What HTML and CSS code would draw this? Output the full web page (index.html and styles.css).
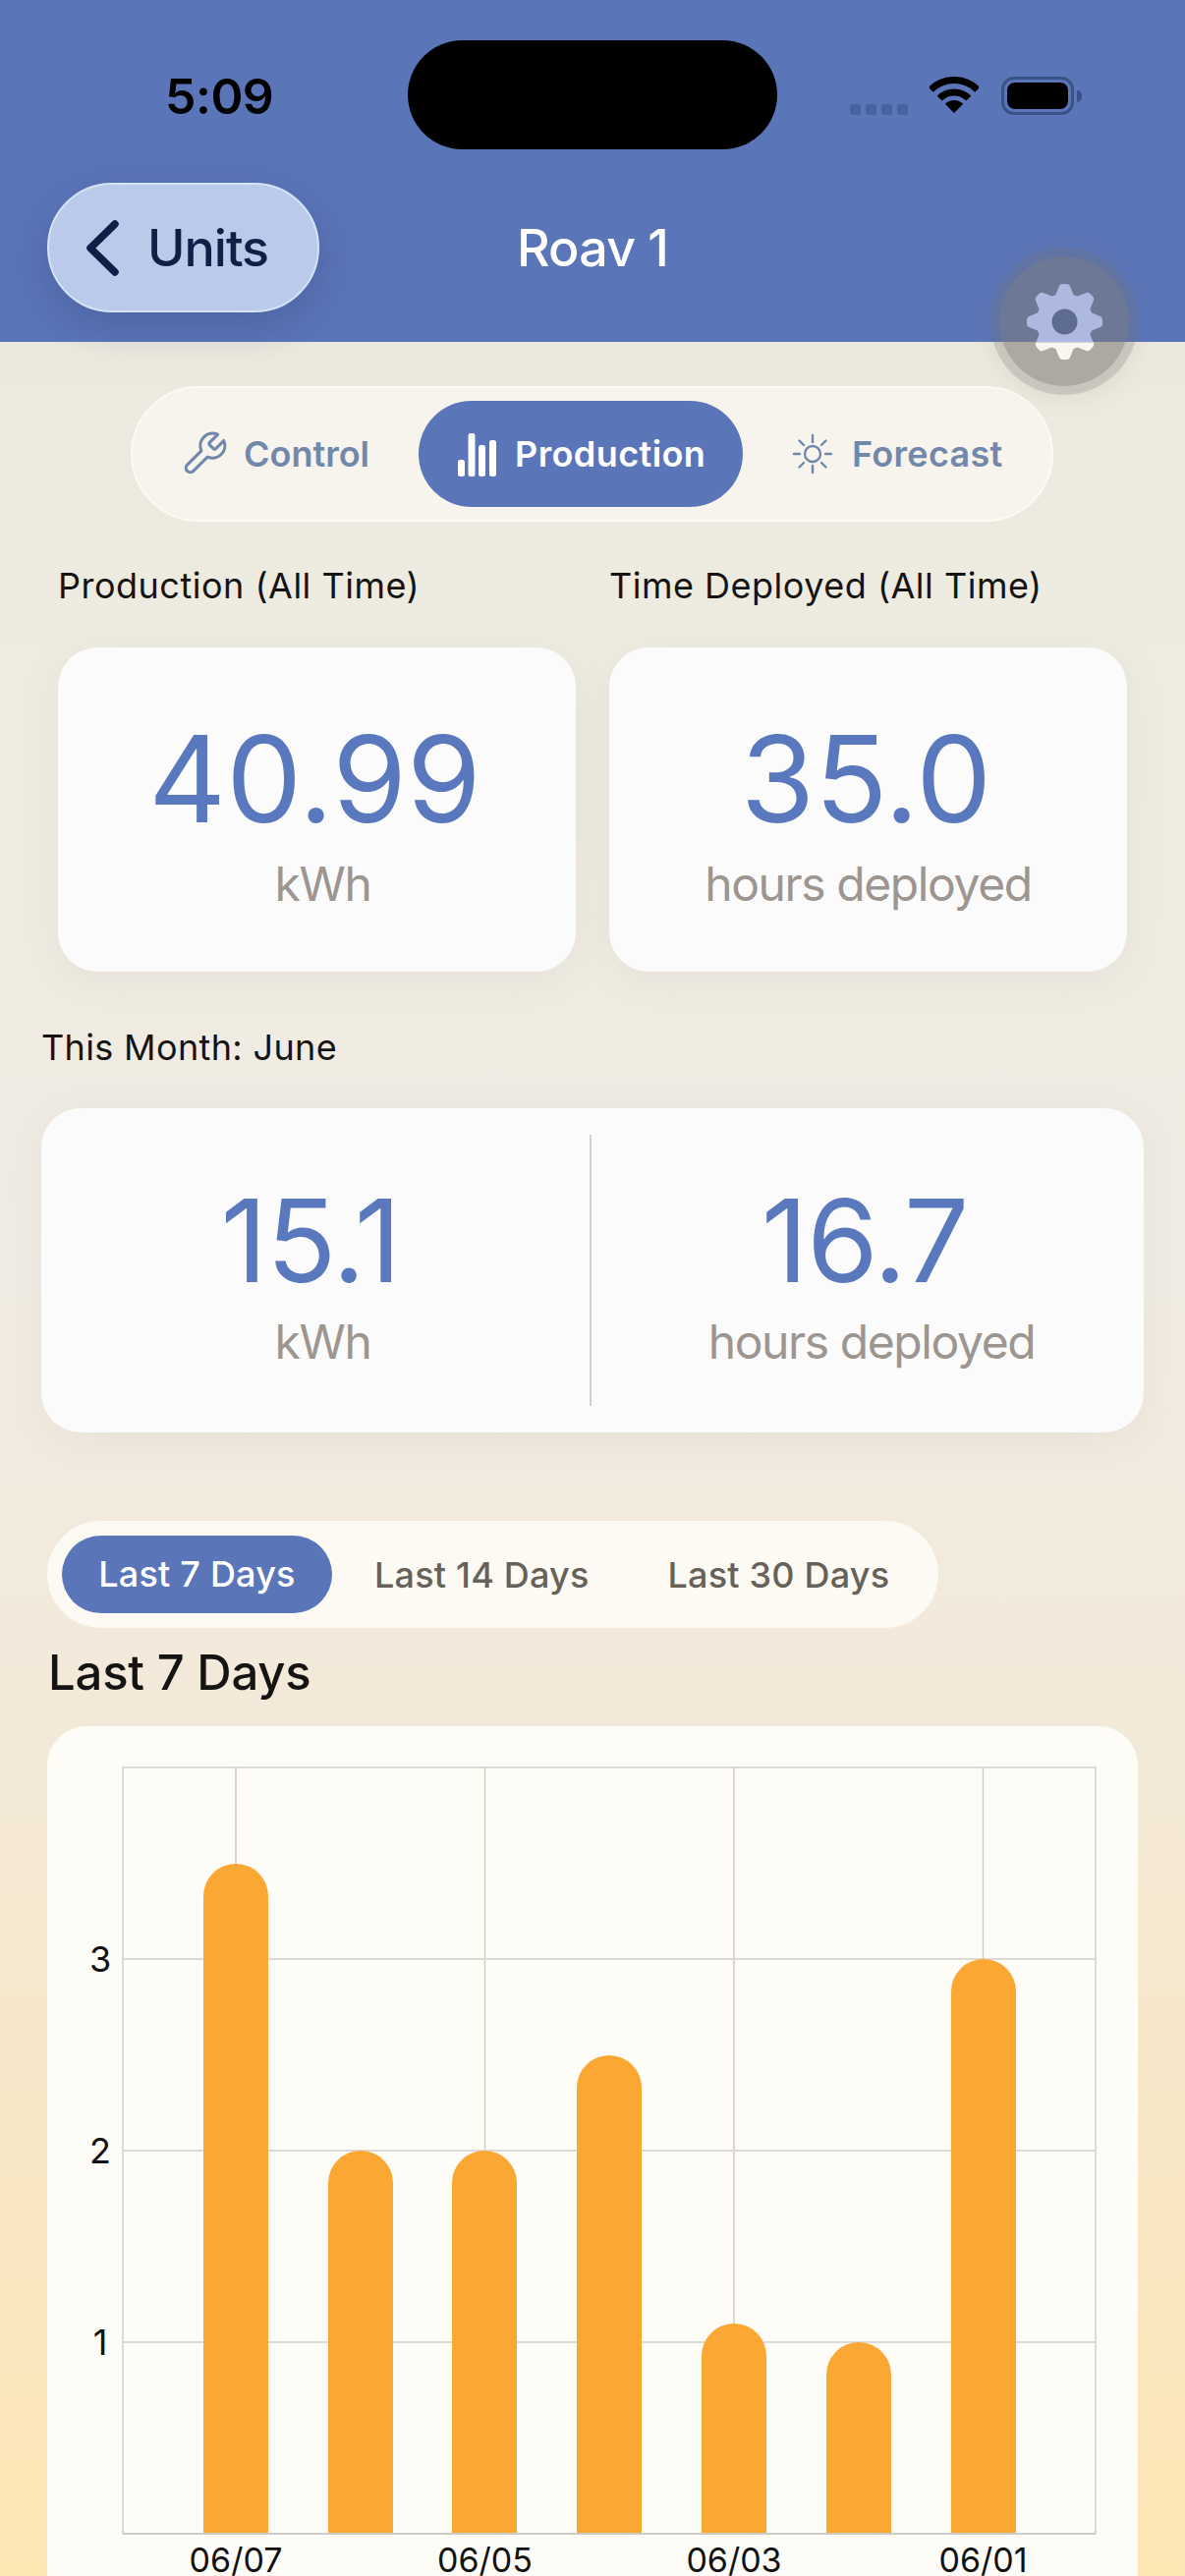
FILE: index.html
```html
<!DOCTYPE html>
<html lang="en">
<head>
<meta charset="utf-8">
<title>Roav 1</title>
<link rel="stylesheet" href="styles.css">
</head>
<body>
<div class="screen">
  <header class="header">
    <div class="status-bar">
      <div class="time">5:09</div>
      <div class="island"></div>
      <div class="status-icons">
        <div class="signal"><i></i><i></i><i></i><i></i></div>
        <svg class="wifi" viewBox="0 0 50 37" width="50" height="37">
          <path d="M1.3 13.3A33.5 33.5 0 0 1 48.7 13.3" fill="none" stroke="#000" stroke-width="7"/>
          <path d="M10.15 22.15A21 21 0 0 1 39.85 22.15" fill="none" stroke="#000" stroke-width="7"/>
          <path d="M25 37L15.8 27.8A13 13 0 0 1 34.2 27.8Z" fill="#000"/>
        </svg>
        <div class="battery"><div class="battery-fill"></div></div>
        <div class="battery-nub"></div>
      </div>
    </div>
    <div class="nav">
      <div class="nav-left">
        <button class="back">
          <svg viewBox="0 0 33 57" width="33" height="57"><path d="M29 4L4 28.5L29 53" fill="none" stroke="#0f1f45" stroke-width="7.5" stroke-linecap="round" stroke-linejoin="round"/></svg>
          <span>Units</span>
        </button>
      </div>
      <h1 class="title">Roav 1</h1>
      <div></div>
    </div>
  </header>

  <button class="gear-btn" aria-label="Settings">
    <svg viewBox="0 0 77 77" width="77" height="77">
      <defs>
        <mask id="gearmask">
          <g fill="#fff">
            <circle cx="38.5" cy="38.5" r="29"/>
            <path d="M29 12 L33 2.2 Q34 0 36.5 0 L40.5 0 Q43 0 44 2.2 L48 12 Z"/>
            <path d="M29 12 L33 2.2 Q34 0 36.5 0 L40.5 0 Q43 0 44 2.2 L48 12 Z" transform="rotate(45 38.5 38.5)"/>
            <path d="M29 12 L33 2.2 Q34 0 36.5 0 L40.5 0 Q43 0 44 2.2 L48 12 Z" transform="rotate(90 38.5 38.5)"/>
            <path d="M29 12 L33 2.2 Q34 0 36.5 0 L40.5 0 Q43 0 44 2.2 L48 12 Z" transform="rotate(135 38.5 38.5)"/>
            <path d="M29 12 L33 2.2 Q34 0 36.5 0 L40.5 0 Q43 0 44 2.2 L48 12 Z" transform="rotate(180 38.5 38.5)"/>
            <path d="M29 12 L33 2.2 Q34 0 36.5 0 L40.5 0 Q43 0 44 2.2 L48 12 Z" transform="rotate(225 38.5 38.5)"/>
            <path d="M29 12 L33 2.2 Q34 0 36.5 0 L40.5 0 Q43 0 44 2.2 L48 12 Z" transform="rotate(270 38.5 38.5)"/>
            <path d="M29 12 L33 2.2 Q34 0 36.5 0 L40.5 0 Q43 0 44 2.2 L48 12 Z" transform="rotate(315 38.5 38.5)"/>
          </g>
        </mask>
      </defs>
      <g mask="url(#gearmask)">
        <rect x="0" y="0" width="77" height="59.5" fill="#adb9df"/>
        <rect x="0" y="59.5" width="77" height="17.5" fill="#f8f6f0"/>
      </g>
      <circle cx="38.5" cy="38.5" r="13" fill="#5e6c94"/>
    </svg>
  </button>

  <main class="content">
    <nav class="tabs">
      <div class="tab tab-control">
        <svg viewBox="0 0 24 24" width="50" height="50"><path d="M14.7 6.3a1 1 0 0 0 0 1.4l1.6 1.6a1 1 0 0 0 1.4 0l3.77-3.77a6 6 0 0 1-7.94 7.94l-6.91 6.91a2.12 2.12 0 0 1-3-3l6.91-6.91a6 6 0 0 1 7.94-7.94l-3.76 3.76z" fill="none" stroke="#7288ab" stroke-width="1.5" stroke-linejoin="round"/></svg>
        <span>Control</span>
      </div>
      <div class="tab tab-active">
        <svg viewBox="0 0 39 45" width="39" height="45" fill="#fff">
          <rect x="0" y="28" width="7" height="17" rx="2.5"/>
          <rect x="10.5" y="1" width="7" height="44" rx="2.5"/>
          <rect x="21" y="13" width="7" height="32" rx="2.5"/>
          <rect x="32" y="8" width="7" height="37" rx="2.5"/>
        </svg>
        <span>Production</span>
      </div>
      <div class="tab tab-forecast">
        <svg viewBox="0 0 42 42" width="42" height="42" fill="none" stroke="#7288ab" stroke-width="2.4" stroke-linecap="round"><circle cx="21" cy="21" r="8"/><path d="M21 2v7M21 33v7M7.5 7.5l4.5 4.5M30 30l4.5 4.5M2 21h6M34 21h6M7.5 34.500l4.500-4.500M34.500 7.500L30 12"/></svg>
        <span>Forecast</span>
      </div>
    </nav>

    <section class="all-time">
      <div class="stat-col">
        <div class="label">Production (All Time)</div>
        <div class="card stat-card">
          <div class="value value-lg">40.99</div>
          <div class="unit unit-nudge">kWh</div>
        </div>
      </div>
      <div class="stat-col">
        <div class="label">Time Deployed (All Time)</div>
        <div class="card stat-card">
          <div class="value value-lg">35.0</div>
          <div class="unit">hours deployed</div>
        </div>
      </div>
    </section>

    <section class="month">
      <div class="label">This Month: June</div>
      <div class="card month-card">
        <div class="month-cell month-cell-left">
          <div class="value value-md value-left">15.1</div>
          <div class="unit unit-month unit-kwh">kWh</div>
        </div>
        <div class="divider"></div>
        <div class="month-cell">
          <div class="value value-md value-right">16.7</div>
          <div class="unit unit-month unit-hours">hours deployed</div>
        </div>
      </div>
    </section>

    <div class="segments">
      <div class="segment segment-active">Last 7 Days</div>
      <div class="segment segment-14">Last 14 Days</div>
      <div class="segment segment-30">Last 30 Days</div>
    </div>

    <h2 class="chart-title">Last 7 Days</h2>

    <section class="chart-card">
      <svg class="chart" viewBox="0 0 1110 865" width="1110" height="865">
        <g class="grid-v">
          <line x1="192" y1="42" x2="192" y2="822"/>
          <line x1="445.5" y1="42" x2="445.5" y2="822"/>
          <line x1="699" y1="42" x2="699" y2="822"/>
          <line x1="952.5" y1="42" x2="952.5" y2="822"/>
        </g>
        <g class="grid-h">
          <line x1="77" y1="237" x2="1067" y2="237"/>
          <line x1="77" y1="432" x2="1067" y2="432"/>
          <line x1="77" y1="627" x2="1067" y2="627"/>
        </g>
        <path class="frame" d="M77 822V42H1067V822"/>
        <g class="bars">
          <path d="M159 822V173a33 33 0 0 1 66 0V822Z"/>
          <path d="M286 822V465a33 33 0 0 1 66 0V822Z"/>
          <path d="M412 822V465a33 33 0 0 1 66 0V822Z"/>
          <path d="M539 822V368a33 33 0 0 1 66 0V822Z"/>
          <path d="M666 822V641a33 33 0 0 1 66 0V822Z"/>
          <path d="M793 822V660a33 33 0 0 1 66 0V822Z"/>
          <path d="M920 822V270a33 33 0 0 1 66 0V822Z"/>
        </g>
        <line class="axis" x1="77" y1="822" x2="1067" y2="822"/>
        <g class="ticks-y">
          <text x="54" y="237">3</text>
          <text x="54" y="432">2</text>
          <text x="54" y="627">1</text>
        </g>
        <g class="ticks-x">
          <text x="192" y="861">06/07</text>
          <text x="445.5" y="861">06/05</text>
          <text x="699" y="861">06/03</text>
          <text x="952.5" y="861">06/01</text>
        </g>
      </svg>
    </section>
  </main>
</div>
</body>
</html>
```

FILE: styles.css
```css
* { box-sizing: border-box; }
html, body { margin: 0; padding: 0; }
body { font-family: Inter, "Liberation Sans", sans-serif; }

.screen {
  position: relative;
  width: 1206px;
  height: 2622px;
  overflow: hidden;
  background: linear-gradient(180deg, #e9e6db 0%, #eeebe1 25%, #f1ece3 50%, #f3e9d8 68%, #f9e7c4 85%, #fde6b4 100%);
}

.header {
  height: 348px;
  background: #5b75b9;
  padding-top: 41px;
}
.status-bar {
  display: grid;
  grid-template-columns: 415px 376px 1fr;
  height: 111px;
}
.time {
  padding: 35px 0 0 168px;
  font-size: 50px;
  line-height: 44px;
  font-weight: 600;
  color: #000;
  letter-spacing: -0.5px;
}
.island { background: #000; border-radius: 56px; }
.status-icons {
  display: flex;
  align-items: flex-start;
  padding: 37px 0 0 74px;
}
.signal { display: flex; gap: 5px; margin-top: 28px; margin-right: 22px; }
.signal i { display: block; width: 11px; height: 11px; border-radius: 3px; background: #48639f; }
.wifi { display: block; margin-right: 23px; }
.battery {
  width: 74px;
  height: 39px;
  border: 3px solid #3b5288;
  border-radius: 13px;
  padding: 3px;
}
.battery-fill { width: 100%; height: 100%; background: #000; border-radius: 8px; }
.battery-nub { width: 5px; height: 12px; margin: 14px 0 0 3px; background: #3b5288; border-radius: 0 6px 6px 0; }

.nav {
  display: grid;
  grid-template-columns: 1fr auto 1fr;
  align-items: center;
  margin-top: 34px;
}
.nav-left { padding-left: 48px; }
.back {
  display: flex;
  align-items: center;
  gap: 29px;
  width: 277px;
  height: 132px;
  padding: 0 0 0 38px;
  border: 2px solid #d5e3f6;
  border-radius: 66px;
  background: #bbcaea;
  box-shadow: 0 14px 44px rgba(30, 40, 80, 0.22);
  font: 500 52px Inter, sans-serif;
  letter-spacing: -1px;
  color: #0f1f45;
}
.back svg { display: block; flex: none; }
.title {
  margin: 0;
  font-size: 52px;
  font-weight: 500;
  letter-spacing: -0.8px;
  color: #fff;
}

.gear-btn {
  position: absolute;
  left: 1017px;
  top: 261px;
  width: 132px;
  height: 132px;
  border: 0;
  padding: 0;
  border-radius: 50%;
  display: flex;
  align-items: center;
  justify-content: center;
  background: linear-gradient(180deg, #6d7896 0, #6d7896 87px, #aca9a0 87px, #aca9a0 100%);
  box-shadow: 0 0 0 9px rgba(115, 115, 110, 0.22), 0 0 22px 12px rgba(115, 115, 110, 0.12);
}
.gear-btn svg { display: block; }

.content { padding-top: 45px; }

.tabs {
  display: flex;
  align-items: center;
  width: 939px;
  height: 138px;
  margin-left: 133px;
  padding-left: 48px;
  background: #f6f4ec;
  border: 2px solid #fbfaf4;
  border-radius: 69px;
}
.tab { display: flex; align-items: center; font-size: 36px; font-weight: 600; color: #7288ab; }
.tab svg { display: block; flex: none; }
.tab-control { gap: 15px; }
.tab-active {
  margin-left: 50px;
  width: 330px;
  height: 108px;
  border-radius: 54px;
  background: #5b75b9;
  color: #fff;
  letter-spacing: 0.4px;
  padding-left: 40px;
  gap: 19px;
}
.tab-forecast { gap: 19px; margin-left: 50px; letter-spacing: 0.3px; }

.all-time {
  display: grid;
  grid-template-columns: 527px 527px;
  gap: 34px;
  margin: 43px 0 0 59px;
}
.label {
  font-size: 36px;
  line-height: 44px;
  font-weight: 400;
  letter-spacing: 0.35px;
  color: #151412;
}
.stat-col .label { margin-bottom: 41px; letter-spacing: 0.5px; }
.card {
  background: #fbfbfb;
  border-radius: 40px;
  box-shadow: 0 8px 40px rgba(120, 120, 110, 0.08);
}
.stat-card {
  height: 330px;
  display: flex;
  flex-direction: column;
  align-items: center;
  padding-top: 69px;
}
.value { color: #5a78bd; font-weight: 400; }
.value-lg { font-size: 122px; line-height: 130px; margin-right: 4px; }
.value-md { font-size: 117px; line-height: 125px; letter-spacing: -1px; }
.value-left { margin-right: 10px; }
.value-right { margin-right: 6px; }
.unit { color: #9c9590; font-size: 48px; line-height: 56px; margin-top: 14px; letter-spacing: -1.4px; }
.unit-nudge { padding-left: 12px; }

.month { margin: 55px 0 0 42px; }
.month > .label { margin-bottom: 40px; }
.month-card {
  display: flex;
  width: 1122px;
  height: 330px;
  align-items: center;
}
.month-cell {
  flex: 1;
  display: flex;
  flex-direction: column;
  align-items: center;
  padding-top: 8px;
}
.month-cell-left { flex: none; width: 558px; }
.divider { width: 2px; height: 276px; background: #d0d0d0; flex: none; }
.unit-month { margin-top: 13px; }
.unit-kwh { padding-left: 15px; }
.unit-hours { padding-left: 8px; }

.segments {
  display: flex;
  align-items: center;
  width: 907px;
  height: 109px;
  margin: 90px 0 0 48px;
  padding-left: 15px;
  border-radius: 55px;
  background: #fcfaf2;
  font-size: 36px;
  letter-spacing: 0.2px;
  font-weight: 500;
  color: #66625a;
}
.segment-active {
  width: 275px;
  height: 79px;
  line-height: 79px;
  text-align: center;
  border-radius: 40px;
  background: #5b75b9;
  color: #fff;
}
.segment-14 { margin-left: 43px; }
.segment-30 { margin-left: 80px; }

.chart-title {
  margin: 16px 0 0 49px;
  font-size: 49px;
  line-height: 60px;
  font-weight: 500;
  letter-spacing: -0.2px;
  color: #151412;
}

.chart-card {
  margin: 24px 0 0 48px;
  width: 1110px;
  height: 900px;
  background: #fefcf6;
  border-radius: 40px;
}
.chart { display: block; overflow: visible; }
.grid-v line { stroke: #cfcdc8; stroke-width: 1.5; }
.grid-h line { stroke: #dcdad5; stroke-width: 2; }
.frame { fill: none; stroke: #d0cec9; stroke-width: 1.5; }
.axis { stroke: #cdcbc5; stroke-width: 2; }
.bars path { fill: #fba733; }
.ticks-y text { font-size: 36px; fill: #111; text-anchor: middle; dominant-baseline: central; }
.ticks-x text { font-size: 34px; fill: #111; text-anchor: middle; }
```
